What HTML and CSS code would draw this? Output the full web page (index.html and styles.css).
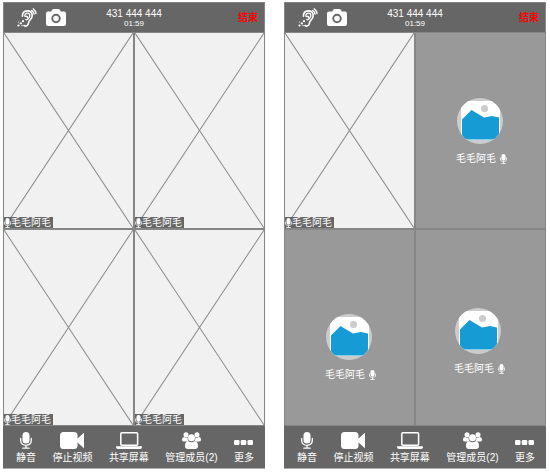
FILE: index.html
```html
<!DOCTYPE html>
<html lang="zh-CN">
<head>
<meta charset="utf-8">
<meta name="viewport" content="width=device-width, initial-scale=1">
<title>视频会议</title>
<link rel="stylesheet" href="styles.css">
</head>
<body>
<svg class="sprite" aria-hidden="true">
  <symbol id="ear" viewBox="0 0 20 20">
    <g fill="none" stroke="currentColor" stroke-linecap="round">
      <path stroke-width="1.6" d="M5.400 8.200C5.400 4.800 7.400 2.900 10.200 2.900c3 0 5 2 5 4.800 0 2.600-1.500 3.500-2.600 4.800-1.200 1.400-.9 2.600-1.600 4-.8 1.700-2.600 2-4 1"/>
      <path stroke-width="1.300" d="M7.800 8.200c0-1.900 1-3 2.500-3s2.500 1.100 2.500 2.600c0 1.700-1.200 2-1.800 3-.5 1-1.600 1.200-2.200.6M8.800 8.500c1.200-.6 2 .2 1.600 1.200"/>
      <path stroke-width="1.300" d="M14.600 2.400c1.300.9 2.200 2.200 2.500 3.800M16.200.8c1.500 1.200 2.500 2.800 2.900 4.700"/>
    </g>
    <g fill="currentColor"><circle cx="1.500" cy="17.500" r="1.100"/><circle cx="3.800" cy="15.300" r="1.100"/><circle cx="6" cy="13.200" r="1.100"/><circle cx="1.500" cy="14" r=".6"/><circle cx="5" cy="17.500" r=".7"/></g>
  </symbol>
  <symbol id="camera" viewBox="0 0 20 18">
    <path fill="currentColor" fill-rule="evenodd" d="M2 2.500h3.200L6.200.8Q6.600 0 7.400 0h5.200q.8 0 1.200.8l1 1.700H18q2 0 2 2V15q0 2-2 2H2q-2 0-2-2V4.500q0-2 2-2zm8 2.300a4.700 4.700 0 1 0 0 9.400 4.700 4.700 0 0 0 0-9.400zm0 1.900a2.800 2.800 0 1 1 0 5.600 2.800 2.800 0 0 1 0-5.600z"/>
  </symbol>
  <symbol id="mic" viewBox="0 0 12 17">
    <rect x="2.500" y="0" width="7" height="11.500" rx="3.500" fill="currentColor"/>
    <path fill="none" stroke="currentColor" stroke-width="1.300" stroke-linecap="round" d="M.7 6.500v2C.7 11.400 3 13.300 6 13.300s5.300-1.900 5.300-4.800v-2M6 13.300v2.700M2.800 16.200h6.400"/>
  </symbol>
  <symbol id="video" viewBox="0 0 24 17">
    <path fill="currentColor" d="M3.500 0h10.500q3.500 0 3.500 3.500v10q0 3.500-3.500 3.500h-10.500q-3.500 0-3.500-3.500v-10q0-3.500 3.500-3.500zM17.500 6.500L24 .8v15.400l-6.500-5.700z"/>
  </symbol>
  <symbol id="laptop" viewBox="0 0 26 17">
    <rect x="4.800" y=".8" width="16.800" height="12.400" rx="1" fill="none" stroke="currentColor" stroke-width="1.500"/>
    <path fill="currentColor" d="M0 14.300h26v.7q0 2-2 2H2q-2 0-2-2z"/>
  </symbol>
  <symbol id="group" viewBox="0 0 19 17">
    <g fill="currentColor">
      <circle cx="4" cy="2.700" r="2.500"/><circle cx="15" cy="2.700" r="2.500"/>
      <path d="M0 8q0-3 2.300-3Q4 6.200 5.600 5.200 5.300 7.800 7 9.500H2Q0 9.500 0 8zM19 8q0-3-2.300-3-1.700 1.200-3.300.2.300 2.600-1.400 4.300h5Q19 9.500 19 8z"/>
      <circle cx="9.500" cy="5.800" r="3.500"/>
      <path d="M6.100 9.200q3.400 2 6.800 0Q16 9.400 16 14q0 3-3 3H6q-3 0-3-3 0-4.600 3.100-4.800z"/>
    </g>
  </symbol>
  <symbol id="dots" viewBox="0 0 19 17">
    <g fill="currentColor"><rect x="0" y="8" width="5.500" height="5" rx="1.200"/><rect x="6.750" y="8" width="5.500" height="5" rx="1.200"/><rect x="13.500" y="8" width="5.500" height="5" rx="1.200"/></g>
  </symbol>
  <symbol id="photo" viewBox="0 0 46 46">
    <rect width="46" height="46" fill="#ccc"/>
    <rect x="4" y="3" width="39" height="39" fill="#fff"/>
    <circle cx="27.500" cy="10.500" r="3.500" fill="#ccc"/>
    <path fill="#169bd5" d="M5 21.500L14.500 12 27 19.500l8-1.500 7 1.500V41.500H5z"/>
  </symbol>
  <symbol id="cross" viewBox="0 0 100 100" preserveAspectRatio="none">
    <path d="M0 0L100 100M100 0L0 100" fill="none" stroke="#8c8c8c" stroke-width="1" vector-effect="non-scaling-stroke"/>
  </symbol>
</svg>

<main class="screens">
  <section class="phone">
    <header class="topbar">
      <div class="tools">
        <button class="icon-btn" type="button" aria-label="听筒"><svg class="ear"><use href="#ear"/></svg></button>
        <button class="icon-btn" type="button" aria-label="切换摄像头"><svg class="camera"><use href="#camera"/></svg></button>
      </div>
      <div class="meeting"><h1 class="number">431 444 444</h1><time class="time">01:59</time></div>
      <button class="end" type="button">结束</button>
    </header>
    <div class="stage">
      <div class="cell video"><svg class="cross"><use href="#cross"/></svg><span class="tag"><svg class="mic"><use href="#mic"/></svg>毛毛阿毛</span></div>
      <div class="cell video"><svg class="cross"><use href="#cross"/></svg><span class="tag"><svg class="mic"><use href="#mic"/></svg>毛毛阿毛</span></div>
      <div class="cell video"><svg class="cross"><use href="#cross"/></svg><span class="tag"><svg class="mic"><use href="#mic"/></svg>毛毛阿毛</span></div>
      <div class="cell video"><svg class="cross"><use href="#cross"/></svg><span class="tag"><svg class="mic"><use href="#mic"/></svg>毛毛阿毛</span></div>
    </div>
    <nav class="toolbar">
      <button class="action" type="button"><svg class="i-mic"><use href="#mic"/></svg>静音</button>
      <button class="action" type="button"><svg class="i-video"><use href="#video"/></svg>停止视频</button>
      <button class="action" type="button"><svg class="i-laptop"><use href="#laptop"/></svg>共享屏幕</button>
      <button class="action" type="button"><svg class="i-group"><use href="#group"/></svg>管理成员(2)</button>
      <button class="action" type="button"><svg class="i-group"><use href="#dots"/></svg>更多</button>
    </nav>
  </section>

  <section class="phone">
    <header class="topbar">
      <div class="tools">
        <button class="icon-btn" type="button" aria-label="听筒"><svg class="ear"><use href="#ear"/></svg></button>
        <button class="icon-btn" type="button" aria-label="切换摄像头"><svg class="camera"><use href="#camera"/></svg></button>
      </div>
      <div class="meeting"><h1 class="number">431 444 444</h1><time class="time">01:59</time></div>
      <button class="end" type="button">结束</button>
    </header>
    <div class="stage">
      <div class="cell video"><svg class="cross"><use href="#cross"/></svg><span class="tag"><svg class="mic"><use href="#mic"/></svg>毛毛阿毛</span></div>
      <div class="cell member"><svg class="avatar"><use href="#photo"/></svg><span class="name">毛毛阿毛<svg class="mic"><use href="#mic"/></svg></span></div>
      <div class="cell member low"><svg class="avatar"><use href="#photo"/></svg><span class="name">毛毛阿毛<svg class="mic"><use href="#mic"/></svg></span></div>
      <div class="cell member mid"><svg class="avatar"><use href="#photo"/></svg><span class="name">毛毛阿毛<svg class="mic"><use href="#mic"/></svg></span></div>
    </div>
    <nav class="toolbar">
      <button class="action" type="button"><svg class="i-mic"><use href="#mic"/></svg>静音</button>
      <button class="action" type="button"><svg class="i-video"><use href="#video"/></svg>停止视频</button>
      <button class="action" type="button"><svg class="i-laptop"><use href="#laptop"/></svg>共享屏幕</button>
      <button class="action" type="button"><svg class="i-group"><use href="#group"/></svg>管理成员(2)</button>
      <button class="action" type="button"><svg class="i-group"><use href="#dots"/></svg>更多</button>
    </nav>
  </section>
</main>
</body>
</html>
```
FILE: styles.css
```css
* { box-sizing: border-box; }

body {
  margin: 0;
  background: #fff;
  color: #fff;
  font: 10px/12px "Liberation Sans", "Noto Sans CJK SC", sans-serif;
}

button {
  padding: 0;
  border: 0;
  background: none;
  color: inherit;
  font: inherit;
  cursor: pointer;
}

svg { display: block; flex: none; }

.sprite { position: absolute; width: 0; height: 0; }

.screens {
  display: grid;
  grid-template-columns: 1fr 1fr;
  gap: 19px;
  min-height: 100vh;
  padding: 2px 4px 3px 3px;
}

.phone { display: flex; flex-direction: column; }

.topbar {
  display: grid;
  grid-template-columns: 1fr auto 1fr;
  align-items: center;
  height: 30px;
  padding: 1px 6px 0 13px;
  background: #666;
  border: 1px solid #858585;
  border-bottom: 0;
}

.tools { display: flex; align-items: center; gap: 9px; }
.ear { width: 20px; height: 20px; }
.camera { width: 20px; height: 18px; }

.meeting { text-align: center; margin-right: 7px; }
.number { margin: 0; font-size: 10px; font-weight: 400; line-height: 12px; }
.time { display: block; font-size: 8px; line-height: 8px; }
.end { justify-self: end; color: #f00; font-weight: 700; }

.stage {
  flex: 1;
  display: grid;
  grid-template: 1fr 1fr / 1fr 1fr;
  gap: 2px;
  padding: 1px;
  background: #868686;
}

.cell { position: relative; display: flex; }
.video { align-items: flex-end; background: #f1f1f1; }
.cross { position: absolute; inset: 0; width: 100%; height: 100%; }

.tag {
  position: relative;
  display: flex;
  align-items: center;
  height: 11px;
  padding-right: 2px;
  background: #666;
}
.mic { width: 7px; height: 10px; }

.member {
  flex-direction: column;
  align-items: center;
  gap: 9px;
  padding: 65px 2px 0 0;
  background: #999;
}
.low { padding-top: 84px; }
.mid { padding: 78px 6px 0 0; }
.avatar { width: 46px; height: 46px; border-radius: 50%; }
.name { display: flex; align-items: center; gap: 4px; padding-left: 4px; }

.toolbar {
  display: flex;
  justify-content: space-between;
  height: 43px;
  padding: 6px 11px 0 13px;
  background: #666;
  border-bottom: 1px solid #aaa;
}
.action { display: flex; flex-direction: column; align-items: center; gap: 3px; white-space: nowrap; }
.i-mic { width: 12px; height: 17px; }
.i-video { width: 24px; height: 17px; }
.i-laptop { width: 26px; height: 17px; }
.i-group { width: 19px; height: 17px; }
```
